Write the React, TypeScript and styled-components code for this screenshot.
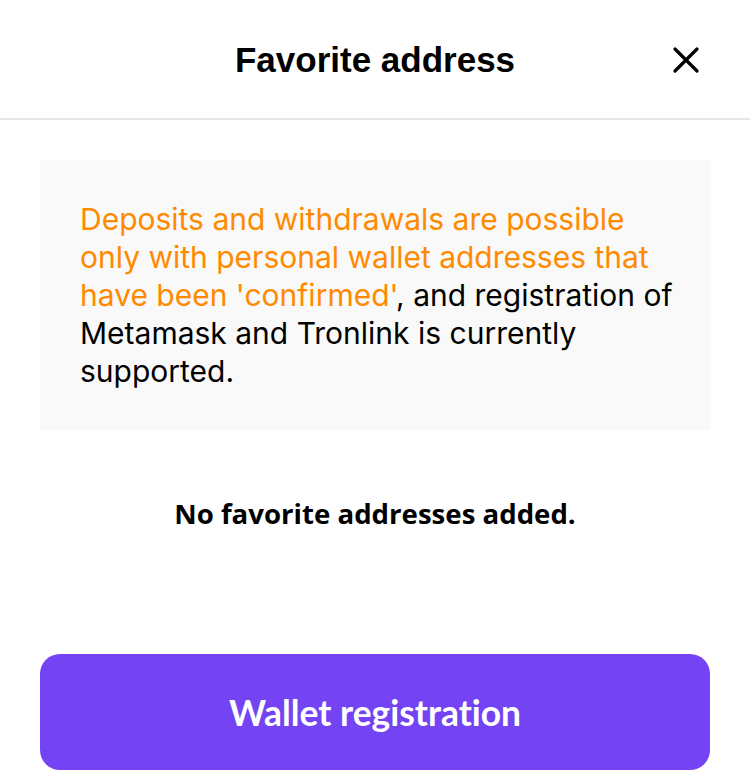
import * as React from "react";
import styled, { createGlobalStyle } from "styled-components";

const GlobalStyle = createGlobalStyle`
  html, body {
    margin: 0;
    padding: 0;
    background: #ffffff;
  }
`;

const Modal = styled.section`
  display: flex;
  flex-direction: column;
  width: 750px;
  background: #ffffff;
`;

const Header = styled.header`
  position: relative;
  display: flex;
  align-items: center;
  justify-content: center;
  height: 118px;
  border-bottom: 2px solid #e6e6e6;
`;

const Title = styled.h1`
  margin: 2px 0 0;
  font-family: "Liberation Sans", Arial, sans-serif;
  font-size: 35px;
  font-weight: 700;
  color: #000000;
`;

const CloseButton = styled.button`
  position: absolute;
  right: 50px;
  top: 50%;
  transform: translateY(-50%);
  display: flex;
  padding: 0;
  margin-top: 1px;
  border: none;
  background: none;
  cursor: pointer;
`;

const Body = styled.div`
  display: flex;
  flex-direction: column;
  padding: 40px 40px 0;
`;

const Notice = styled.div`
  padding: 40px 28px 40px 40px;
  background: #f9f9f9;
  font-family: Inter, "Noto Sans", sans-serif;
  font-size: 30px;
  line-height: 38px;
  color: #000000;
`;

const Highlight = styled.span`
  color: #ff8a00;
`;

const EmptyState = styled.p`
  margin: 64px 0 0;
  font-family: "Open Sans", "Noto Sans", sans-serif;
  font-size: 27.6px;
  line-height: 38px;
  font-weight: 700;
  text-align: center;
  color: #000000;
`;

const PrimaryButton = styled.button`
  margin-top: 122px;
  height: 116px;
  border: none;
  border-radius: 20px;
  background: #7444f4;
  color: #ffffff;
  font-family: Lato, "Noto Sans", sans-serif;
  font-size: 35.4px;
  font-weight: 700;
  font-variant-ligatures: none;
  cursor: pointer;
`;

function CloseIcon() {
  return (
    <svg width="28" height="28" viewBox="0 0 28 28" fill="none">
      <path
        d="M3 3L25 25M25 3L3 25"
        stroke="#000000"
        strokeWidth="3.2"
        strokeLinecap="round"
      />
    </svg>
  );
}

export default function App() {
  return (
    <>
      <GlobalStyle />
      <Modal>
        <Header>
          <Title>Favorite address</Title>
          <CloseButton aria-label="Close">
            <CloseIcon />
          </CloseButton>
        </Header>
        <Body>
          <Notice>
            <Highlight>
              Deposits and withdrawals are possible only with personal wallet
              addresses that have been 'confirmed'
            </Highlight>
            , and registration of Metamask and Tronlink is currently supported.
          </Notice>
          <EmptyState>No favorite addresses added.</EmptyState>
          <PrimaryButton>Wallet registration</PrimaryButton>
        </Body>
      </Modal>
    </>
  );
}
